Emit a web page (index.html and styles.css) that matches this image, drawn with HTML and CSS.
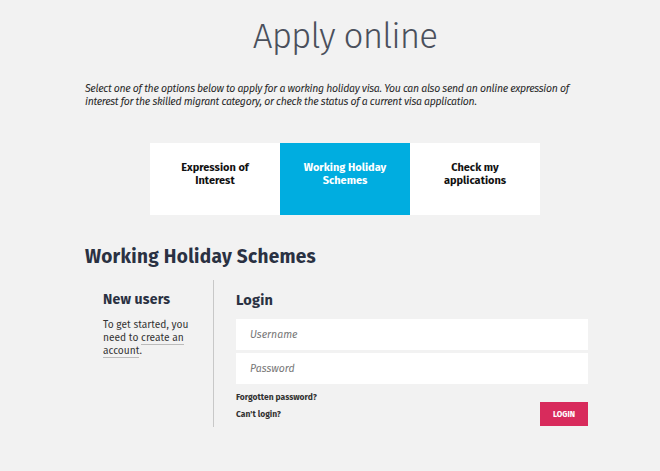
FILE: index.html
```html
<!DOCTYPE html>
<html>
<head>
<meta charset="utf-8">
<link rel="stylesheet" href="styles.css">
</head>
<body>
<div class="page">
  <h1 class="title">Apply online</h1>
  <p class="intro">Select one of the options below to apply for a working holiday visa. You can also send an online expression of interest for the skilled migrant category, or check the status of a current visa application.</p>
  <div class="tabs">
    <div class="tab">Expression of<br>Interest</div>
    <div class="tab active">Working Holiday<br>Schemes</div>
    <div class="tab">Check my<br>applications</div>
  </div>
  <h2 class="section-title">Working Holiday Schemes</h2>
  <div class="panel">
    <div class="new-users">
      <h3 class="col-title">New users</h3>
      <p class="new-text">To get started, you need to <span class="link">create an account</span>.</p>
    </div>
    <div class="login">
      <h3 class="col-title">Login</h3>
      <div class="field">Username</div>
      <div class="field">Password</div>
      <div class="login-foot">
        <div class="links">
          <span class="small-link">Forgotten password?</span>
          <span class="small-link">Can't login?</span>
        </div>
        <span class="btn">LOGIN</span>
      </div>
    </div>
  </div>
</div>
</body>
</html>
```
FILE: styles.css
```css
html, body { margin: 0; padding: 0; background: #f2f2f2; }
body { font-family: "Fira Sans", "Open Sans", "DejaVu Sans", sans-serif; color: #2b2f3a; }
.page { width: 660px; height: 471px; overflow: hidden; }
.title {
  margin: 0; padding-top: 13px;
  text-align: center; font-weight: 300; font-size: 35px; line-height: 46px;
  color: #4a505c; padding-left: 30px; letter-spacing: -0.9px;
}
.intro {
  margin: 23px 0 0 85px; width: 500px;
  font-style: italic; font-size: 10.5px; line-height: 13px; color: #2a2a2a;
  letter-spacing: -0.3px;
}
.tabs { display: flex; margin: 35px 0 0 150px; width: 390px; height: 72px; }
.tab {
  flex: 1; background: #fff; display: flex; align-items: center; justify-content: center;
  text-align: center; font-weight: 700; font-size: 11px; line-height: 13px; color: #111;
  padding-bottom: 10px; box-sizing: border-box;
}
.tab.active { background: #00ade0; color: #fff; }
.section-title {
  margin: 30px 0 0 85px; font-size: 19px; line-height: 24px; font-weight: 700; color: #2a3142;
  letter-spacing: 0.3px;
}
.panel { display: flex; margin: 11px 0 0 85px; }
.new-users {
  width: 110px; padding: 12px 0 0 18px; border-right: 1px solid #c8c8c8;
  height: 135px;
}
.col-title { margin: 0; font-size: 14px; line-height: 16px; font-weight: 700; color: #2a3142; letter-spacing: 0.2px; }
.new-text { margin: 10px 0 0; width: 96px; font-size: 10.2px; line-height: 13px; color: #333; }
.link { border-bottom: 1px solid #bbb; }
.login { padding: 12px 0 0 22px; width: 352px; }
.login .col-title { font-size: 14.5px; }
.field {
  background: #fff; height: 31px; padding-left: 14px;
  display: flex; align-items: center; font-style: italic; font-size: 10.5px; color: #777;
}
.login .col-title + .field { margin-top: 11px; }
.field + .field { margin-top: 3px; }
.login-foot { display: flex; justify-content: space-between; margin-top: 8px; }
.links { display: flex; flex-direction: column; gap: 7px; }
.small-link { font-size: 8.5px; font-weight: 700; color: #333; line-height: 10px; }
.btn {
  margin-top: 10px; width: 48px; height: 24px; background: #d82b5c; color: #fff;
  font-size: 8px; font-weight: 700; display: flex; align-items: center; justify-content: center;
}
```
